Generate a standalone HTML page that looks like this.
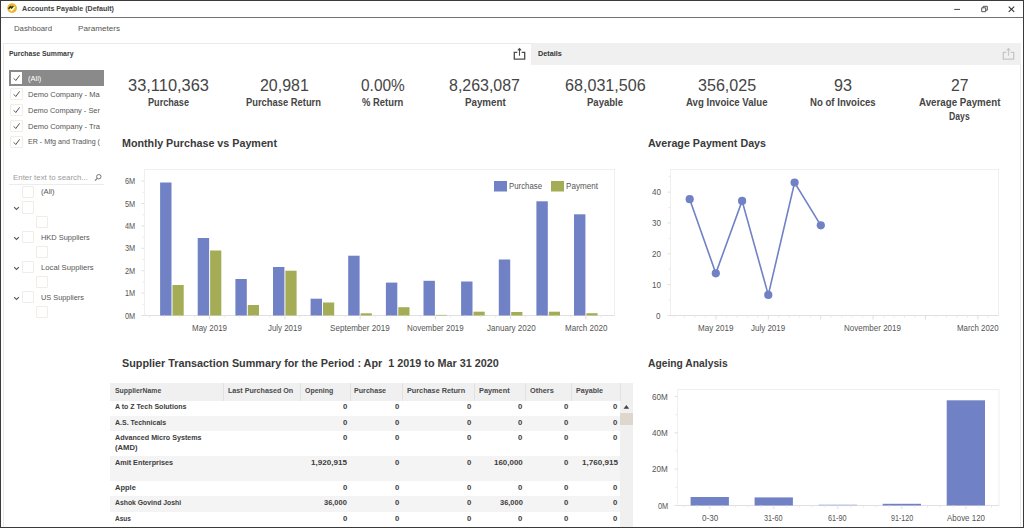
<!DOCTYPE html>
<html lang="en"><head><meta charset="utf-8">
<title>Accounts Payable (Default)</title>
<style>
html,body{margin:0;padding:0;background:#fff;}
body{width:1024px;height:528px;overflow:hidden;position:relative;
 font-family:"Liberation Sans",sans-serif;}
#win{position:absolute;left:0;top:0;width:1022px;height:526px;border:1px solid #3a3a3a;overflow:hidden;}
#c{position:absolute;left:-1px;top:-1px;width:1024px;height:528px;}
.b{position:absolute;box-sizing:border-box;display:block;}
.t{position:absolute;display:block;white-space:pre;line-height:0;height:0;
 transform-origin:0 0;font-family:"Liberation Sans",sans-serif;}
</style></head><body>
<div id="win"><div id="c">
<div class="b" style="left:1px;top:17px;width:1022px;height:1px;background:#727272;"></div>
<svg class="b" style="left:6px;top:2px" width="13" height="13" viewBox="0 0 13 13">
<circle cx="6.1" cy="6.1" r="4.9" fill="#e9bb2c"/>
<path d="M2.4 6.7 L4.5 4.6 L5.5 5.9 L7.3 4.3" fill="none" stroke="#3a3020" stroke-width="1.5"/>
<path d="M4.2 6.9 L5.6 8.5 L8.8 4.9" fill="none" stroke="#fff" stroke-width="1.4"/>
</svg>
<svg class="b" style="left:950px;top:2px" width="70" height="14" viewBox="0 0 70 14">
<path d="M4.2 7.4 H10" stroke="#444" stroke-width="1" fill="none"/>
<path d="M31.7 5.8 H35.7 V9.7 H31.7 Z M33.2 5.8 V4.3 H37.3 V8.2 H35.7" stroke="#444" stroke-width="0.9" fill="none"/>
<path d="M58.7 4.7 L64.2 9.9 M64.2 4.7 L58.7 9.9" stroke="#333" stroke-width="1.1" fill="none"/>
</svg>
<div class="b" style="left:3px;top:43px;width:1018px;height:490px;border:1px solid #ebe9e6;border-bottom:none;"></div>
<svg class="b" style="left:513.1px;top:47px" width="14" height="14" viewBox="0 0 14 14">
<path d="M4.3 5.3 H1.3 V12.1 H11.7 V5.3 H8.7" fill="none" stroke="#4c4c4c" stroke-width="1.3"/>
<path d="M6.5 8.8 V1.6 M4.8 3.3 L6.5 1.6 L8.2 3.3" fill="none" stroke="#4c4c4c" stroke-width="1.1"/>
</svg>
<div class="b" style="left:531px;top:43px;width:490px;height:21.5px;background:#f0f0f0;"></div>
<svg class="b" style="left:1001.7px;top:46.8px" width="14" height="14" viewBox="0 0 14 14">
<path d="M4.3 5.3 H1.3 V12.1 H11.7 V5.3 H8.7" fill="none" stroke="#c6c6c6" stroke-width="1.3"/>
<path d="M6.5 8.8 V1.6 M4.8 3.3 L6.5 1.6 L8.2 3.3" fill="none" stroke="#c6c6c6" stroke-width="1.1"/>
</svg>
<div class="b" style="left:9px;top:70px;width:95px;height:16px;background:#8a8a8a;"></div>
<div class="b" style="left:10.7px;top:72px;width:11.7px;height:12px;background:#fff;"><svg width="10" height="10" viewBox="0 0 10 10" style="position:absolute;left:1px;top:1px"><path d="M1.8 5.4 L3.8 7.5 L7.6 2.4" fill="none" stroke="#484848" stroke-width="0.95"/></svg></div>
<div class="b" style="left:10.4px;top:88px;width:12.2px;height:12px;background:#fff;border:1px solid #f0ede9;border-radius:1px;"><svg width="10" height="10" viewBox="0 0 10 10" style="position:absolute;left:0.3px;top:0px"><path d="M1.8 5.4 L3.8 7.5 L7.6 2.4" fill="none" stroke="#484848" stroke-width="0.95"/></svg></div>
<div class="b" style="left:10.4px;top:104px;width:12.2px;height:12px;background:#fff;border:1px solid #f0ede9;border-radius:1px;"><svg width="10" height="10" viewBox="0 0 10 10" style="position:absolute;left:0.3px;top:0px"><path d="M1.8 5.4 L3.8 7.5 L7.6 2.4" fill="none" stroke="#484848" stroke-width="0.95"/></svg></div>
<div class="b" style="left:10.4px;top:120px;width:12.2px;height:12px;background:#fff;border:1px solid #f0ede9;border-radius:1px;"><svg width="10" height="10" viewBox="0 0 10 10" style="position:absolute;left:0.3px;top:0px"><path d="M1.8 5.4 L3.8 7.5 L7.6 2.4" fill="none" stroke="#484848" stroke-width="0.95"/></svg></div>
<div class="b" style="left:10.4px;top:135.7px;width:12.2px;height:12px;background:#fff;border:1px solid #f0ede9;border-radius:1px;"><svg width="10" height="10" viewBox="0 0 10 10" style="position:absolute;left:0.3px;top:0px"><path d="M1.8 5.4 L3.8 7.5 L7.6 2.4" fill="none" stroke="#484848" stroke-width="0.95"/></svg></div>
<div class="b" style="left:96px;top:87px;width:8px;height:63px;background:linear-gradient(90deg,rgba(255,255,255,0),#fff 80%);"></div>
<div class="b" style="left:9px;top:184px;width:95px;height:1px;background:#ececec;"></div>
<svg class="b" style="left:93px;top:172px" width="11" height="11" viewBox="0 0 11 11">
<circle cx="5.8" cy="4.7" r="2.2" fill="none" stroke="#777" stroke-width="1"/>
<path d="M4.2 6.4 L2.1 8.6" stroke="#777" stroke-width="1.2" fill="none"/></svg>
<div class="b" style="left:22px;top:186.10000000000002px;width:12.3px;height:12.3px;background:#fff;border:1px solid #f0ede9;border-radius:1px;"></div>
<div class="b" style="left:22px;top:201.3px;width:12.3px;height:12.3px;background:#fff;border:1px solid #f0ede9;border-radius:1px;"></div>
<svg class="b" style="left:12.6px;top:206.1px" width="7" height="5" viewBox="0 0 7 5">
<path d="M1.1 1.1 L3.5 3.5 L5.9 1.1" fill="none" stroke="#5c5c5c" stroke-width="1.15"/></svg>
<div class="b" style="left:36px;top:216.1px;width:12.3px;height:12.3px;background:#fff;border:1px solid #f0ede9;border-radius:1px;"></div>
<div class="b" style="left:22px;top:230.8px;width:12.3px;height:12.3px;background:#fff;border:1px solid #f0ede9;border-radius:1px;"></div>
<svg class="b" style="left:12.6px;top:235.6px" width="7" height="5" viewBox="0 0 7 5">
<path d="M1.1 1.1 L3.5 3.5 L5.9 1.1" fill="none" stroke="#5c5c5c" stroke-width="1.15"/></svg>
<div class="b" style="left:36px;top:246.1px;width:12.3px;height:12.3px;background:#fff;border:1px solid #f0ede9;border-radius:1px;"></div>
<div class="b" style="left:22px;top:260.8px;width:12.3px;height:12.3px;background:#fff;border:1px solid #f0ede9;border-radius:1px;"></div>
<svg class="b" style="left:12.6px;top:265.6px" width="7" height="5" viewBox="0 0 7 5">
<path d="M1.1 1.1 L3.5 3.5 L5.9 1.1" fill="none" stroke="#5c5c5c" stroke-width="1.15"/></svg>
<div class="b" style="left:36px;top:276.1px;width:12.3px;height:12.3px;background:#fff;border:1px solid #f0ede9;border-radius:1px;"></div>
<div class="b" style="left:22px;top:290.8px;width:12.3px;height:12.3px;background:#fff;border:1px solid #f0ede9;border-radius:1px;"></div>
<svg class="b" style="left:12.6px;top:295.6px" width="7" height="5" viewBox="0 0 7 5">
<path d="M1.1 1.1 L3.5 3.5 L5.9 1.1" fill="none" stroke="#5c5c5c" stroke-width="1.15"/></svg>
<div class="b" style="left:36px;top:306.1px;width:12.3px;height:12.3px;background:#fff;border:1px solid #f0ede9;border-radius:1px;"></div>
<svg class="b" style="left:0;top:0" width="1024" height="528" viewBox="0 0 1024 528">
<rect x="144.5" y="169.5" width="470" height="146" fill="#fff" stroke="#efefef" stroke-width="1"/>
<path d="M144.5 315.5 H614.5" stroke="#e0e0e0" stroke-width="1"/>
<path d="M141.5 315.5 H144.5" stroke="#e0e0e0" stroke-width="1"/>
<path d="M142.5 304.3 H144.5" stroke="#e9e9e9" stroke-width="1"/>
<path d="M141.5 293.1 H144.5" stroke="#e0e0e0" stroke-width="1"/>
<path d="M142.5 281.9 H144.5" stroke="#e9e9e9" stroke-width="1"/>
<path d="M141.5 270.7 H144.5" stroke="#e0e0e0" stroke-width="1"/>
<path d="M142.5 259.5 H144.5" stroke="#e9e9e9" stroke-width="1"/>
<path d="M141.5 248.3 H144.5" stroke="#e0e0e0" stroke-width="1"/>
<path d="M142.5 237.1 H144.5" stroke="#e9e9e9" stroke-width="1"/>
<path d="M141.5 225.9 H144.5" stroke="#e0e0e0" stroke-width="1"/>
<path d="M142.5 214.7 H144.5" stroke="#e9e9e9" stroke-width="1"/>
<path d="M141.5 203.5 H144.5" stroke="#e0e0e0" stroke-width="1"/>
<path d="M142.5 192.3 H144.5" stroke="#e9e9e9" stroke-width="1"/>
<path d="M141.5 181.1 H144.5" stroke="#e0e0e0" stroke-width="1"/>
<rect x="160.1" y="182.5" width="11.4" height="133.0" fill="#7181c6"/>
<rect x="172.5" y="285" width="11.2" height="30.5" fill="#a4ad55"/>
<rect x="197.7" y="238" width="11.4" height="77.5" fill="#7181c6"/>
<rect x="210.1" y="250.5" width="11.2" height="65.0" fill="#a4ad55"/>
<rect x="235.4" y="279" width="11.4" height="36.5" fill="#7181c6"/>
<rect x="247.8" y="305" width="11.2" height="10.5" fill="#a4ad55"/>
<rect x="273.0" y="267" width="11.4" height="48.5" fill="#7181c6"/>
<rect x="285.4" y="270.7" width="11.2" height="44.8" fill="#a4ad55"/>
<rect x="310.6" y="298.7" width="11.4" height="16.8" fill="#7181c6"/>
<rect x="323.0" y="302.5" width="11.2" height="13.0" fill="#a4ad55"/>
<rect x="348.2" y="255.7" width="11.4" height="59.8" fill="#7181c6"/>
<rect x="360.6" y="313.3" width="11.2" height="2.2" fill="#a4ad55"/>
<rect x="385.9" y="282.6" width="11.4" height="32.9" fill="#7181c6"/>
<rect x="398.3" y="307.2" width="11.2" height="8.3" fill="#a4ad55"/>
<rect x="423.5" y="280.8" width="11.4" height="34.7" fill="#7181c6"/>
<rect x="435.9" y="314.9" width="11.2" height="0.6" fill="#a4ad55"/>
<rect x="461.1" y="281.5" width="11.4" height="34.0" fill="#7181c6"/>
<rect x="473.5" y="311.7" width="11.2" height="3.8" fill="#a4ad55"/>
<rect x="498.8" y="259.5" width="11.4" height="56.0" fill="#7181c6"/>
<rect x="511.2" y="312" width="11.2" height="3.5" fill="#a4ad55"/>
<rect x="536.4" y="201.3" width="11.4" height="114.2" fill="#7181c6"/>
<rect x="548.8" y="311.7" width="11.2" height="3.8" fill="#a4ad55"/>
<rect x="574.0" y="214.3" width="11.4" height="101.2" fill="#7181c6"/>
<rect x="586.4" y="313.2" width="11.2" height="2.3" fill="#a4ad55"/>
<path d="M149.4 315.5 V317.5" stroke="#e9e9e9" stroke-width="1"/>
<path d="M164.5 315.5 V317.5" stroke="#e9e9e9" stroke-width="1"/>
<path d="M179.5 315.5 V317.5" stroke="#e9e9e9" stroke-width="1"/>
<path d="M194.6 315.5 V317.5" stroke="#e9e9e9" stroke-width="1"/>
<path d="M209.6 315.5 V319.5" stroke="#e0e0e0" stroke-width="1"/>
<path d="M224.7 315.5 V317.5" stroke="#e9e9e9" stroke-width="1"/>
<path d="M239.7 315.5 V317.5" stroke="#e9e9e9" stroke-width="1"/>
<path d="M254.8 315.5 V317.5" stroke="#e9e9e9" stroke-width="1"/>
<path d="M269.8 315.5 V317.5" stroke="#e9e9e9" stroke-width="1"/>
<path d="M284.9 315.5 V319.5" stroke="#e0e0e0" stroke-width="1"/>
<path d="M299.9 315.5 V317.5" stroke="#e9e9e9" stroke-width="1"/>
<path d="M315.0 315.5 V317.5" stroke="#e9e9e9" stroke-width="1"/>
<path d="M330.0 315.5 V317.5" stroke="#e9e9e9" stroke-width="1"/>
<path d="M345.1 315.5 V317.5" stroke="#e9e9e9" stroke-width="1"/>
<path d="M360.1 315.5 V319.5" stroke="#e0e0e0" stroke-width="1"/>
<path d="M375.2 315.5 V317.5" stroke="#e9e9e9" stroke-width="1"/>
<path d="M390.3 315.5 V317.5" stroke="#e9e9e9" stroke-width="1"/>
<path d="M405.3 315.5 V317.5" stroke="#e9e9e9" stroke-width="1"/>
<path d="M420.4 315.5 V317.5" stroke="#e9e9e9" stroke-width="1"/>
<path d="M435.4 315.5 V319.5" stroke="#e0e0e0" stroke-width="1"/>
<path d="M450.5 315.5 V317.5" stroke="#e9e9e9" stroke-width="1"/>
<path d="M465.5 315.5 V317.5" stroke="#e9e9e9" stroke-width="1"/>
<path d="M480.6 315.5 V317.5" stroke="#e9e9e9" stroke-width="1"/>
<path d="M495.6 315.5 V317.5" stroke="#e9e9e9" stroke-width="1"/>
<path d="M510.7 315.5 V319.5" stroke="#e0e0e0" stroke-width="1"/>
<path d="M525.7 315.5 V317.5" stroke="#e9e9e9" stroke-width="1"/>
<path d="M540.8 315.5 V317.5" stroke="#e9e9e9" stroke-width="1"/>
<path d="M555.8 315.5 V317.5" stroke="#e9e9e9" stroke-width="1"/>
<path d="M570.9 315.5 V317.5" stroke="#e9e9e9" stroke-width="1"/>
<path d="M585.9 315.5 V319.5" stroke="#e0e0e0" stroke-width="1"/>
<path d="M601.0 315.5 V317.5" stroke="#e9e9e9" stroke-width="1"/>
<rect x="494" y="181" width="13" height="10.5" fill="#7181c6"/>
<rect x="551" y="181" width="13" height="10.5" fill="#a4ad55"/>
<rect x="670.5" y="169.5" width="328" height="146" fill="#fff" stroke="#efefef" stroke-width="1"/>
<path d="M670.5 315.5 H998.5" stroke="#e0e0e0" stroke-width="1"/>
<path d="M667.5 315.5 H670.5" stroke="#e0e0e0" stroke-width="1"/>
<path d="M668.5 300.1 H670.5" stroke="#e9e9e9" stroke-width="1"/>
<path d="M667.5 284.6 H670.5" stroke="#e0e0e0" stroke-width="1"/>
<path d="M668.5 269.2 H670.5" stroke="#e9e9e9" stroke-width="1"/>
<path d="M667.5 253.8 H670.5" stroke="#e0e0e0" stroke-width="1"/>
<path d="M668.5 238.4 H670.5" stroke="#e9e9e9" stroke-width="1"/>
<path d="M667.5 222.9 H670.5" stroke="#e0e0e0" stroke-width="1"/>
<path d="M668.5 207.5 H670.5" stroke="#e9e9e9" stroke-width="1"/>
<path d="M667.5 192.1 H670.5" stroke="#e0e0e0" stroke-width="1"/>
<path d="M668.5 176.7 H670.5" stroke="#e9e9e9" stroke-width="1"/>
<path d="M689.7 199.2 L715.8 273.3 L742.1 200.9 L768.3 294.9 L794.6 182.5 L820.8 225.3" fill="none" stroke="#7181c6" stroke-width="1.6"/>
<circle cx="689.7" cy="199.2" r="4.1" fill="#7181c6"/>
<circle cx="715.8" cy="273.3" r="4.1" fill="#7181c6"/>
<circle cx="742.1" cy="200.9" r="4.1" fill="#7181c6"/>
<circle cx="768.3" cy="294.9" r="4.1" fill="#7181c6"/>
<circle cx="794.6" cy="182.5" r="4.1" fill="#7181c6"/>
<circle cx="820.8" cy="225.3" r="4.1" fill="#7181c6"/>
<path d="M674.0 315.5 V317.5" stroke="#e9e9e9" stroke-width="1"/>
<path d="M684.5 315.5 V317.5" stroke="#e9e9e9" stroke-width="1"/>
<path d="M694.9 315.5 V317.5" stroke="#e9e9e9" stroke-width="1"/>
<path d="M705.4 315.5 V317.5" stroke="#e9e9e9" stroke-width="1"/>
<path d="M715.9 315.5 V319.5" stroke="#e0e0e0" stroke-width="1"/>
<path d="M726.4 315.5 V317.5" stroke="#e9e9e9" stroke-width="1"/>
<path d="M736.9 315.5 V317.5" stroke="#e9e9e9" stroke-width="1"/>
<path d="M747.3 315.5 V317.5" stroke="#e9e9e9" stroke-width="1"/>
<path d="M757.8 315.5 V317.5" stroke="#e9e9e9" stroke-width="1"/>
<path d="M768.3 315.5 V319.5" stroke="#e0e0e0" stroke-width="1"/>
<path d="M778.8 315.5 V317.5" stroke="#e9e9e9" stroke-width="1"/>
<path d="M789.3 315.5 V317.5" stroke="#e9e9e9" stroke-width="1"/>
<path d="M799.7 315.5 V317.5" stroke="#e9e9e9" stroke-width="1"/>
<path d="M810.2 315.5 V317.5" stroke="#e9e9e9" stroke-width="1"/>
<path d="M820.7 315.5 V319.5" stroke="#e0e0e0" stroke-width="1"/>
<path d="M831.2 315.5 V317.5" stroke="#e9e9e9" stroke-width="1"/>
<path d="M841.7 315.5 V317.5" stroke="#e9e9e9" stroke-width="1"/>
<path d="M852.1 315.5 V317.5" stroke="#e9e9e9" stroke-width="1"/>
<path d="M862.6 315.5 V317.5" stroke="#e9e9e9" stroke-width="1"/>
<path d="M873.1 315.5 V319.5" stroke="#e0e0e0" stroke-width="1"/>
<path d="M883.6 315.5 V317.5" stroke="#e9e9e9" stroke-width="1"/>
<path d="M894.1 315.5 V317.5" stroke="#e9e9e9" stroke-width="1"/>
<path d="M904.5 315.5 V317.5" stroke="#e9e9e9" stroke-width="1"/>
<path d="M915.0 315.5 V317.5" stroke="#e9e9e9" stroke-width="1"/>
<path d="M925.5 315.5 V319.5" stroke="#e0e0e0" stroke-width="1"/>
<path d="M936.0 315.5 V317.5" stroke="#e9e9e9" stroke-width="1"/>
<path d="M946.5 315.5 V317.5" stroke="#e9e9e9" stroke-width="1"/>
<path d="M956.9 315.5 V317.5" stroke="#e9e9e9" stroke-width="1"/>
<path d="M967.4 315.5 V317.5" stroke="#e9e9e9" stroke-width="1"/>
<path d="M977.9 315.5 V319.5" stroke="#e0e0e0" stroke-width="1"/>
<path d="M988.4 315.5 V317.5" stroke="#e9e9e9" stroke-width="1"/>
<rect x="677.5" y="389.5" width="321.5" height="116" fill="#fff" stroke="#efefef" stroke-width="1"/>
<path d="M677.5 505.5 H999" stroke="#e0e0e0" stroke-width="1"/>
<path d="M674.5 505.5 H677.5" stroke="#e0e0e0" stroke-width="1"/>
<path d="M675.5 487.3 H677.5" stroke="#e9e9e9" stroke-width="1"/>
<path d="M674.5 469.1 H677.5" stroke="#e0e0e0" stroke-width="1"/>
<path d="M675.5 451.0 H677.5" stroke="#e9e9e9" stroke-width="1"/>
<path d="M674.5 432.8 H677.5" stroke="#e0e0e0" stroke-width="1"/>
<path d="M675.5 414.6 H677.5" stroke="#e9e9e9" stroke-width="1"/>
<path d="M674.5 396.4 H677.5" stroke="#e0e0e0" stroke-width="1"/>
<rect x="690.6" y="497" width="38.3" height="8.5" fill="#7181c6"/>
<path d="M684.1 505.5 V507.5" stroke="#e9e9e9" stroke-width="1"/>
<path d="M697.0 505.5 V507.5" stroke="#e9e9e9" stroke-width="1"/>
<path d="M709.8 505.5 V509" stroke="#e0e0e0" stroke-width="1"/>
<path d="M722.5 505.5 V507.5" stroke="#e9e9e9" stroke-width="1"/>
<path d="M735.4 505.5 V507.5" stroke="#e9e9e9" stroke-width="1"/>
<rect x="754.6" y="497.4" width="38.3" height="8.1" fill="#7181c6"/>
<path d="M748.2 505.5 V507.5" stroke="#e9e9e9" stroke-width="1"/>
<path d="M761.0 505.5 V507.5" stroke="#e9e9e9" stroke-width="1"/>
<path d="M773.8 505.5 V509" stroke="#e0e0e0" stroke-width="1"/>
<path d="M786.6 505.5 V507.5" stroke="#e9e9e9" stroke-width="1"/>
<path d="M799.4 505.5 V507.5" stroke="#e9e9e9" stroke-width="1"/>
<rect x="818.7" y="504.6" width="38.3" height="0.9" fill="#aab3dd"/>
<path d="M812.2 505.5 V507.5" stroke="#e9e9e9" stroke-width="1"/>
<path d="M825.0 505.5 V507.5" stroke="#e9e9e9" stroke-width="1"/>
<path d="M837.8 505.5 V509" stroke="#e0e0e0" stroke-width="1"/>
<path d="M850.6 505.5 V507.5" stroke="#e9e9e9" stroke-width="1"/>
<path d="M863.4 505.5 V507.5" stroke="#e9e9e9" stroke-width="1"/>
<rect x="882.7" y="503.8" width="38.3" height="1.7" fill="#7181c6"/>
<path d="M876.2 505.5 V507.5" stroke="#e9e9e9" stroke-width="1"/>
<path d="M889.0 505.5 V507.5" stroke="#e9e9e9" stroke-width="1"/>
<path d="M901.8 505.5 V509" stroke="#e0e0e0" stroke-width="1"/>
<path d="M914.6 505.5 V507.5" stroke="#e9e9e9" stroke-width="1"/>
<path d="M927.4 505.5 V507.5" stroke="#e9e9e9" stroke-width="1"/>
<rect x="946.7" y="400.3" width="38.3" height="105.2" fill="#7181c6"/>
<path d="M940.3 505.5 V507.5" stroke="#e9e9e9" stroke-width="1"/>
<path d="M953.1 505.5 V507.5" stroke="#e9e9e9" stroke-width="1"/>
<path d="M965.9 505.5 V509" stroke="#e0e0e0" stroke-width="1"/>
<path d="M978.7 505.5 V507.5" stroke="#e9e9e9" stroke-width="1"/>
<path d="M991.5 505.5 V507.5" stroke="#e9e9e9" stroke-width="1"/>
</svg>
<div class="b" style="left:110px;top:383px;width:523px;height:17.5px;background:#f0f0f0;"></div>
<div class="b" style="left:222.5px;top:383px;width:1px;height:17.5px;background:#e2e2e2;"></div>
<div class="b" style="left:300.0px;top:383px;width:1px;height:17.5px;background:#e2e2e2;"></div>
<div class="b" style="left:350.0px;top:383px;width:1px;height:17.5px;background:#e2e2e2;"></div>
<div class="b" style="left:402.0px;top:383px;width:1px;height:17.5px;background:#e2e2e2;"></div>
<div class="b" style="left:473.8px;top:383px;width:1px;height:17.5px;background:#e2e2e2;"></div>
<div class="b" style="left:524.5px;top:383px;width:1px;height:17.5px;background:#e2e2e2;"></div>
<div class="b" style="left:570.5px;top:383px;width:1px;height:17.5px;background:#e2e2e2;"></div>
<div class="b" style="left:619.5px;top:383px;width:1px;height:17.5px;background:#e2e2e2;"></div>
<div class="b" style="left:620px;top:400.5px;width:12.7px;height:127px;background:#f0f0f0;"></div>
<div class="b" style="left:620.3px;top:413px;width:12.4px;height:12px;background:#ddd7cd;"></div>
<svg class="b" style="left:623px;top:404px" width="7" height="6" viewBox="0 0 7 6">
<path d="M0.6 4.8 L3.4 1 L6.2 4.8 Z" fill="#444"/></svg>
<div class="b" style="left:110px;top:415.5px;width:510px;height:0.5px;background:#f3f3f3;"></div>
<div class="b" style="left:110px;top:416px;width:510px;height:15.300000000000011px;background:#f4f4f4;"></div>
<div class="b" style="left:110px;top:455.7px;width:510px;height:0.5px;background:#f3f3f3;"></div>
<div class="b" style="left:110px;top:456.2px;width:510px;height:25.30000000000001px;background:#f4f4f4;"></div>
<div class="b" style="left:110px;top:496.3px;width:510px;height:0.5px;background:#f3f3f3;"></div>
<div class="b" style="left:110px;top:496.8px;width:510px;height:15.699999999999989px;background:#f4f4f4;"></div>
<div class="b" style="left:110px;top:527.5px;width:510px;height:0.5px;background:#f3f3f3;"></div>
<span class="t" style="left:22.00px;top:9px;font-size:7.7px;color:#424242;font-weight:bold;transform:scaleX(0.9242);">Accounts Payable (Default)</span>
<span class="t" style="left:14.00px;top:29px;font-size:7.8px;color:#555;transform:scaleX(0.9959);">Dashboard</span>
<span class="t" style="left:78.00px;top:29px;font-size:7.8px;color:#555;transform:scaleX(1.0419);">Parameters</span>
<span class="t" style="left:8.50px;top:54px;font-size:7.2px;color:#3a3a3a;font-weight:bold;transform:scaleX(0.9609);">Purchase Summary</span>
<span class="t" style="left:537.80px;top:54px;font-size:8px;color:#333;font-weight:bold;transform:scaleX(0.9034);">Details</span>
<span class="t" style="left:28.00px;top:79px;font-size:7.8px;color:#fff;transform:scaleX(0.9596);">(All)</span>
<span class="t" style="left:28.00px;top:95px;font-size:7.8px;color:#555;transform:scaleX(0.9663);">Demo Company - Ma</span>
<span class="t" style="left:28.00px;top:111px;font-size:7.8px;color:#555;transform:scaleX(0.9548);">Demo Company - Ser</span>
<span class="t" style="left:28.00px;top:127px;font-size:7.8px;color:#555;transform:scaleX(0.9660);">Demo Company - Tra</span>
<span class="t" style="left:28.00px;top:142px;font-size:7.8px;color:#555;transform:scaleX(0.9128);">ER - Mfg and Trading (</span>
<span class="t" style="left:13.00px;top:178px;font-size:8px;color:#9c9c9c;transform:scaleX(0.9862);">Enter text to search...</span>
<span class="t" style="left:40.80px;top:192px;font-size:7.8px;color:#555;transform:scaleX(0.9813);">(All)</span>
<span class="t" style="left:40.80px;top:238px;font-size:7.8px;color:#555;transform:scaleX(0.9542);">HKD Suppliers</span>
<span class="t" style="left:40.80px;top:268px;font-size:7.8px;color:#555;transform:scaleX(0.9866);">Local Suppliers</span>
<span class="t" style="left:40.80px;top:298px;font-size:7.8px;color:#555;transform:scaleX(0.9425);">US Suppliers</span>
<span class="t" style="left:128.00px;top:86px;font-size:16px;color:#454545;transform:scaleX(1.0267);">33,110,363</span>
<span class="t" style="left:259.50px;top:86px;font-size:16px;color:#454545;transform:scaleX(0.9972);">20,981</span>
<span class="t" style="left:360.60px;top:86px;font-size:16px;color:#454545;transform:scaleX(0.9653);">0.00%</span>
<span class="t" style="left:449.00px;top:86px;font-size:16px;color:#454545;transform:scaleX(0.9974);">8,263,087</span>
<span class="t" style="left:565.30px;top:86px;font-size:16px;color:#454545;transform:scaleX(1.0078);">68,031,506</span>
<span class="t" style="left:698.00px;top:86px;font-size:16px;color:#454545;transform:scaleX(1.0062);">356,025</span>
<span class="t" style="left:833.80px;top:86px;font-size:16px;color:#454545;transform:scaleX(1.0114);">93</span>
<span class="t" style="left:950.50px;top:86px;font-size:16px;color:#454545;transform:scaleX(0.9833);">27</span>
<span class="t" style="left:148.00px;top:103px;font-size:10px;color:#454545;font-weight:bold;transform:scaleX(0.9105);">Purchase</span>
<span class="t" style="left:246.00px;top:103px;font-size:10px;color:#454545;font-weight:bold;transform:scaleX(0.9371);">Purchase Return</span>
<span class="t" style="left:361.50px;top:103px;font-size:10px;color:#454545;font-weight:bold;transform:scaleX(0.9406);">% Return</span>
<span class="t" style="left:465.30px;top:103px;font-size:10px;color:#454545;font-weight:bold;transform:scaleX(0.9763);">Payment</span>
<span class="t" style="left:587.00px;top:103px;font-size:10px;color:#454545;font-weight:bold;transform:scaleX(0.9521);">Payable</span>
<span class="t" style="left:686.00px;top:103px;font-size:10px;color:#454545;font-weight:bold;transform:scaleX(0.9625);">Avg Invoice Value</span>
<span class="t" style="left:809.80px;top:103px;font-size:10px;color:#454545;font-weight:bold;transform:scaleX(0.9611);">No of Invoices</span>
<span class="t" style="left:918.60px;top:103px;font-size:10px;color:#454545;font-weight:bold;transform:scaleX(0.9741);">Average Payment</span>
<span class="t" style="left:949.30px;top:117px;font-size:10px;color:#454545;font-weight:bold;transform:scaleX(0.8659);">Days</span>
<span class="t" style="left:122.00px;top:143px;font-size:11px;color:#3a3a3a;font-weight:bold;transform:scaleX(0.9751);">Monthly Purchase vs Payment</span>
<span class="t" style="left:648.00px;top:143px;font-size:11px;color:#3a3a3a;font-weight:bold;transform:scaleX(0.9729);">Average Payment Days</span>
<span class="t" style="left:122.00px;top:363px;font-size:11px;color:#3a3a3a;font-weight:bold;transform:scaleX(0.9825);">Supplier Transaction Summary for the Period : Apr  1 2019 to Mar 31 2020</span>
<span class="t" style="left:648.30px;top:363px;font-size:11px;color:#3a3a3a;font-weight:bold;transform:scaleX(0.9358);">Ageing Analysis</span>
<span class="t" style="left:124.80px;top:316px;font-size:8.3px;color:#555;transform:scaleX(0.8846);">0M</span>
<span class="t" style="left:124.80px;top:293px;font-size:8.3px;color:#555;transform:scaleX(0.8846);">1M</span>
<span class="t" style="left:124.80px;top:271px;font-size:8.3px;color:#555;transform:scaleX(0.8846);">2M</span>
<span class="t" style="left:124.80px;top:248px;font-size:8.3px;color:#555;transform:scaleX(0.8846);">3M</span>
<span class="t" style="left:124.80px;top:226px;font-size:8.3px;color:#555;transform:scaleX(0.8846);">4M</span>
<span class="t" style="left:124.80px;top:204px;font-size:8.3px;color:#555;transform:scaleX(0.8846);">5M</span>
<span class="t" style="left:124.80px;top:181px;font-size:8.3px;color:#555;transform:scaleX(0.8846);">6M</span>
<span class="t" style="left:509.00px;top:186px;font-size:8.3px;color:#555;transform:scaleX(0.9412);">Purchase</span>
<span class="t" style="left:566.00px;top:186px;font-size:8.3px;color:#555;transform:scaleX(0.9771);">Payment</span>
<span class="t" style="left:192.33px;top:328px;font-size:8.3px;color:#555;transform:scaleX(0.9605);">May 2019</span>
<span class="t" style="left:268.19px;top:328px;font-size:8.3px;color:#555;transform:scaleX(0.9513);">July 2019</span>
<span class="t" style="left:330.45px;top:328px;font-size:8.3px;color:#555;transform:scaleX(0.9746);">September 2019</span>
<span class="t" style="left:407.26px;top:328px;font-size:8.3px;color:#555;transform:scaleX(0.9603);">November 2019</span>
<span class="t" style="left:486.52px;top:328px;font-size:8.3px;color:#555;transform:scaleX(0.9686);">January 2020</span>
<span class="t" style="left:564.93px;top:328px;font-size:8.3px;color:#555;transform:scaleX(0.9674);">March 2020</span>
<span class="t" style="left:656.10px;top:316px;font-size:8.3px;color:#555;transform:scaleX(0.9730);">0</span>
<span class="t" style="left:651.60px;top:285px;font-size:8.3px;color:#555;transform:scaleX(0.9746);">10</span>
<span class="t" style="left:651.60px;top:254px;font-size:8.3px;color:#555;transform:scaleX(0.9746);">20</span>
<span class="t" style="left:651.60px;top:223px;font-size:8.3px;color:#555;transform:scaleX(0.9746);">30</span>
<span class="t" style="left:651.60px;top:192px;font-size:8.3px;color:#555;transform:scaleX(0.9746);">40</span>
<span class="t" style="left:698.00px;top:328px;font-size:8.3px;color:#555;transform:scaleX(0.9715);">May 2019</span>
<span class="t" style="left:751.00px;top:328px;font-size:8.3px;color:#555;transform:scaleX(0.9625);">July 2019</span>
<span class="t" style="left:844.40px;top:328px;font-size:8.3px;color:#555;transform:scaleX(0.9653);">November 2019</span>
<span class="t" style="left:956.90px;top:328px;font-size:8.3px;color:#555;transform:scaleX(0.9492);">March 2020</span>
<span class="t" style="left:658.00px;top:506px;font-size:8.3px;color:#555;transform:scaleX(0.8846);">0M</span>
<span class="t" style="left:652.40px;top:469px;font-size:8.3px;color:#555;transform:scaleX(0.9789);">20M</span>
<span class="t" style="left:652.40px;top:433px;font-size:8.3px;color:#555;transform:scaleX(0.9789);">40M</span>
<span class="t" style="left:652.40px;top:397px;font-size:8.3px;color:#555;transform:scaleX(0.9789);">60M</span>
<span class="t" style="left:701.65px;top:518px;font-size:8.3px;color:#555;transform:scaleX(0.9754);">0-30</span>
<span class="t" style="left:764.40px;top:518px;font-size:8.3px;color:#555;transform:scaleX(0.8759);">31-60</span>
<span class="t" style="left:828.35px;top:518px;font-size:8.3px;color:#555;transform:scaleX(0.8759);">61-90</span>
<span class="t" style="left:890.50px;top:518px;font-size:8.3px;color:#555;transform:scaleX(0.8590);">91-120</span>
<span class="t" style="left:946.55px;top:518px;font-size:8.3px;color:#555;transform:scaleX(0.9575);">Above 120</span>
<span class="t" style="left:115.20px;top:391px;font-size:7.6px;color:#4a4a4a;font-weight:bold;transform:scaleX(0.9067);">SupplierName</span>
<span class="t" style="left:228.00px;top:391px;font-size:7.6px;color:#4a4a4a;font-weight:bold;transform:scaleX(0.9419);">Last Purchased On</span>
<span class="t" style="left:305.20px;top:391px;font-size:7.6px;color:#4a4a4a;font-weight:bold;transform:scaleX(0.9189);">Opening</span>
<span class="t" style="left:354.40px;top:391px;font-size:7.6px;color:#4a4a4a;font-weight:bold;transform:scaleX(0.9385);">Purchase</span>
<span class="t" style="left:407.40px;top:391px;font-size:7.6px;color:#4a4a4a;font-weight:bold;transform:scaleX(0.9559);">Purchase Return</span>
<span class="t" style="left:479.20px;top:391px;font-size:7.6px;color:#4a4a4a;font-weight:bold;transform:scaleX(0.9666);">Payment</span>
<span class="t" style="left:530.00px;top:391px;font-size:7.6px;color:#4a4a4a;font-weight:bold;transform:scaleX(0.9720);">Others</span>
<span class="t" style="left:576.30px;top:391px;font-size:7.6px;color:#4a4a4a;font-weight:bold;transform:scaleX(0.9402);">Payable</span>
<span class="t" style="left:115.20px;top:407px;font-size:7.8px;color:#3c3c3c;font-weight:bold;transform:scaleX(0.9008);">A to Z Tech Solutions</span>
<span class="t" style="left:342.70px;top:407px;font-size:7.8px;color:#3c3c3c;font-weight:bold;transform:scaleX(0.9899);">0</span>
<span class="t" style="left:395.40px;top:407px;font-size:7.8px;color:#3c3c3c;font-weight:bold;transform:scaleX(0.9899);">0</span>
<span class="t" style="left:466.70px;top:407px;font-size:7.8px;color:#3c3c3c;font-weight:bold;transform:scaleX(0.9899);">0</span>
<span class="t" style="left:518.10px;top:407px;font-size:7.8px;color:#3c3c3c;font-weight:bold;transform:scaleX(0.9899);">0</span>
<span class="t" style="left:563.60px;top:407px;font-size:7.8px;color:#3c3c3c;font-weight:bold;transform:scaleX(0.9899);">0</span>
<span class="t" style="left:613.40px;top:407px;font-size:7.8px;color:#3c3c3c;font-weight:bold;transform:scaleX(0.9899);">0</span>
<span class="t" style="left:115.20px;top:423px;font-size:7.8px;color:#3c3c3c;font-weight:bold;transform:scaleX(0.8955);">A.S. Technicals</span>
<span class="t" style="left:342.70px;top:423px;font-size:7.8px;color:#3c3c3c;font-weight:bold;transform:scaleX(0.9899);">0</span>
<span class="t" style="left:395.40px;top:423px;font-size:7.8px;color:#3c3c3c;font-weight:bold;transform:scaleX(0.9899);">0</span>
<span class="t" style="left:466.70px;top:423px;font-size:7.8px;color:#3c3c3c;font-weight:bold;transform:scaleX(0.9899);">0</span>
<span class="t" style="left:518.10px;top:423px;font-size:7.8px;color:#3c3c3c;font-weight:bold;transform:scaleX(0.9899);">0</span>
<span class="t" style="left:563.60px;top:423px;font-size:7.8px;color:#3c3c3c;font-weight:bold;transform:scaleX(0.9899);">0</span>
<span class="t" style="left:613.40px;top:423px;font-size:7.8px;color:#3c3c3c;font-weight:bold;transform:scaleX(0.9899);">0</span>
<span class="t" style="left:115.20px;top:438px;font-size:7.8px;color:#3c3c3c;font-weight:bold;transform:scaleX(0.9167);">Advanced Micro Systems</span>
<span class="t" style="left:115.20px;top:448px;font-size:7.8px;color:#3c3c3c;font-weight:bold;transform:scaleX(0.9803);">(AMD)</span>
<span class="t" style="left:342.70px;top:438px;font-size:7.8px;color:#3c3c3c;font-weight:bold;transform:scaleX(0.9899);">0</span>
<span class="t" style="left:395.40px;top:438px;font-size:7.8px;color:#3c3c3c;font-weight:bold;transform:scaleX(0.9899);">0</span>
<span class="t" style="left:466.70px;top:438px;font-size:7.8px;color:#3c3c3c;font-weight:bold;transform:scaleX(0.9899);">0</span>
<span class="t" style="left:518.10px;top:438px;font-size:7.8px;color:#3c3c3c;font-weight:bold;transform:scaleX(0.9899);">0</span>
<span class="t" style="left:563.60px;top:438px;font-size:7.8px;color:#3c3c3c;font-weight:bold;transform:scaleX(0.9899);">0</span>
<span class="t" style="left:613.40px;top:438px;font-size:7.8px;color:#3c3c3c;font-weight:bold;transform:scaleX(0.9899);">0</span>
<span class="t" style="left:115.20px;top:463px;font-size:7.8px;color:#3c3c3c;font-weight:bold;transform:scaleX(0.9294);">Amit Enterprises</span>
<span class="t" style="left:311.00px;top:463px;font-size:7.8px;color:#3c3c3c;font-weight:bold;transform:scaleX(1.0378);">1,920,915</span>
<span class="t" style="left:395.40px;top:463px;font-size:7.8px;color:#3c3c3c;font-weight:bold;transform:scaleX(0.9899);">0</span>
<span class="t" style="left:466.70px;top:463px;font-size:7.8px;color:#3c3c3c;font-weight:bold;transform:scaleX(0.9899);">0</span>
<span class="t" style="left:493.60px;top:463px;font-size:7.8px;color:#3c3c3c;font-weight:bold;transform:scaleX(1.0217);">160,000</span>
<span class="t" style="left:563.60px;top:463px;font-size:7.8px;color:#3c3c3c;font-weight:bold;transform:scaleX(0.9899);">0</span>
<span class="t" style="left:581.70px;top:463px;font-size:7.8px;color:#3c3c3c;font-weight:bold;transform:scaleX(1.0378);">1,760,915</span>
<span class="t" style="left:115.20px;top:488px;font-size:7.8px;color:#3c3c3c;font-weight:bold;transform:scaleX(0.9598);">Apple</span>
<span class="t" style="left:342.70px;top:488px;font-size:7.8px;color:#3c3c3c;font-weight:bold;transform:scaleX(0.9899);">0</span>
<span class="t" style="left:395.40px;top:488px;font-size:7.8px;color:#3c3c3c;font-weight:bold;transform:scaleX(0.9899);">0</span>
<span class="t" style="left:466.70px;top:488px;font-size:7.8px;color:#3c3c3c;font-weight:bold;transform:scaleX(0.9899);">0</span>
<span class="t" style="left:518.10px;top:488px;font-size:7.8px;color:#3c3c3c;font-weight:bold;transform:scaleX(0.9899);">0</span>
<span class="t" style="left:563.60px;top:488px;font-size:7.8px;color:#3c3c3c;font-weight:bold;transform:scaleX(0.9899);">0</span>
<span class="t" style="left:613.40px;top:488px;font-size:7.8px;color:#3c3c3c;font-weight:bold;transform:scaleX(0.9899);">0</span>
<span class="t" style="left:115.20px;top:503px;font-size:7.8px;color:#3c3c3c;font-weight:bold;transform:scaleX(0.8768);">Ashok Govind Joshi</span>
<span class="t" style="left:324.20px;top:503px;font-size:7.8px;color:#3c3c3c;font-weight:bold;transform:scaleX(0.9556);">36,000</span>
<span class="t" style="left:395.40px;top:503px;font-size:7.8px;color:#3c3c3c;font-weight:bold;transform:scaleX(0.9899);">0</span>
<span class="t" style="left:466.70px;top:503px;font-size:7.8px;color:#3c3c3c;font-weight:bold;transform:scaleX(0.9899);">0</span>
<span class="t" style="left:499.60px;top:503px;font-size:7.8px;color:#3c3c3c;font-weight:bold;transform:scaleX(0.9556);">36,000</span>
<span class="t" style="left:563.60px;top:503px;font-size:7.8px;color:#3c3c3c;font-weight:bold;transform:scaleX(0.9899);">0</span>
<span class="t" style="left:613.40px;top:503px;font-size:7.8px;color:#3c3c3c;font-weight:bold;transform:scaleX(0.9899);">0</span>
<span class="t" style="left:115.20px;top:519px;font-size:7.8px;color:#3c3c3c;font-weight:bold;transform:scaleX(0.8387);">Asus</span>
<span class="t" style="left:342.70px;top:519px;font-size:7.8px;color:#3c3c3c;font-weight:bold;transform:scaleX(0.9899);">0</span>
<span class="t" style="left:395.40px;top:519px;font-size:7.8px;color:#3c3c3c;font-weight:bold;transform:scaleX(0.9899);">0</span>
<span class="t" style="left:466.70px;top:519px;font-size:7.8px;color:#3c3c3c;font-weight:bold;transform:scaleX(0.9899);">0</span>
<span class="t" style="left:518.10px;top:519px;font-size:7.8px;color:#3c3c3c;font-weight:bold;transform:scaleX(0.9899);">0</span>
<span class="t" style="left:563.60px;top:519px;font-size:7.8px;color:#3c3c3c;font-weight:bold;transform:scaleX(0.9899);">0</span>
<span class="t" style="left:613.40px;top:519px;font-size:7.8px;color:#3c3c3c;font-weight:bold;transform:scaleX(0.9899);">0</span>
</div></div></body></html>
